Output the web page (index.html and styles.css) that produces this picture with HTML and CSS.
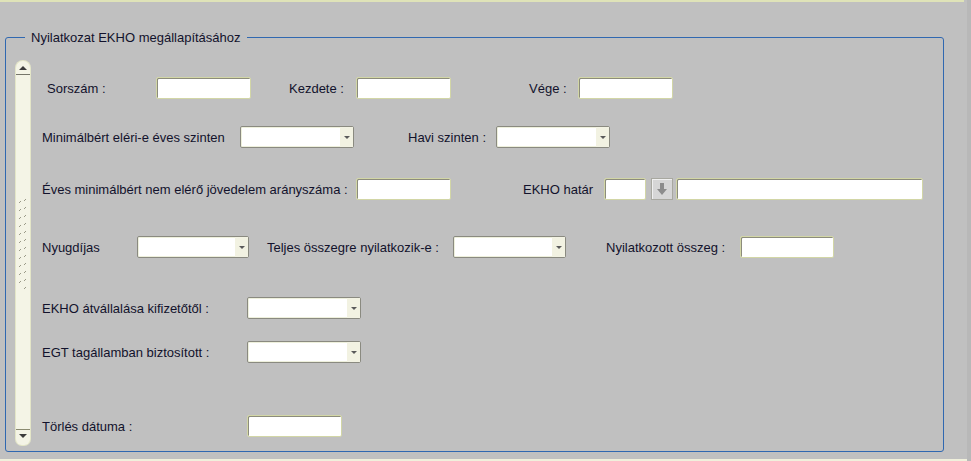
FILE: index.html
```html
<!DOCTYPE html>
<html lang="hu">
<head>
    <meta charset="UTF-8">
    <title>Nyilatkozat EKHO megállapításához</title>
    <link rel="stylesheet" href="styles.css">
</head>
<body>

<div class="window">
    <div class="top-strip"></div>

    <fieldset class="panel">
        <legend>Nyilatkozat EKHO megállapításához</legend>

        <div class="panel-body">
            <div class="scrollbar">
                <div class="scroll-btn up"><span class="tri-up"></span></div>
                <div class="scroll-track">
                    <svg class="grip" width="10" height="92" viewBox="0 0 10 92">
                        <defs>
                            <pattern id="grip" width="10" height="8" patternUnits="userSpaceOnUse">
                                <rect x="1" y="5" width="1" height="1" fill="#9a9a88"/>
                                <rect x="2" y="4" width="1" height="1" fill="#9a9a88"/>
                                <rect x="6" y="3" width="1" height="1" fill="#9a9a88"/>
                                <rect x="7" y="2" width="1" height="1" fill="#9a9a88"/>
                            </pattern>
                        </defs>
                        <rect width="10" height="92" fill="url(#grip)"/>
                    </svg>
                </div>
                <div class="scroll-btn down"><span class="tri-down"></span></div>
            </div>

            <div class="form">
                <div class="row row-1">
                    <label class="lbl-sorszam">Sorszám :</label>
                    <input class="w95" type="text">
                    <label class="lbl-kezdete">Kezdete :</label>
                    <input class="w95" type="text">
                    <label class="lbl-vege">Vége :</label>
                    <input class="w95" type="text">
                </div>

                <div class="row row-2">
                    <label class="lbl-minimal">Minimálbért eléri-e éves szinten</label>
                    <div class="combo w114"><span class="combo-btn"></span></div>
                    <label class="lbl-havi">Havi szinten :</label>
                    <div class="combo w114"><span class="combo-btn"></span></div>
                </div>

                <div class="row row-3">
                    <label class="lbl-aranyszam">Éves minimálbért nem elérő jövedelem arányszáma :</label>
                    <input class="w95" type="text">
                    <label class="lbl-hatar">EKHO határ</label>
                    <input class="w42" type="text">
                    <button class="lov-btn">
                        <svg width="14" height="14" viewBox="0 0 14 14">
                            <path d="M5 1h4v6h3l-5 6-5-6h3z" fill="#8c8c8c"/>
                        </svg>
                    </button>
                    <input class="w247" type="text">
                </div>

                <div class="row row-4">
                    <label class="lbl-nyugdij">Nyugdíjas</label>
                    <div class="combo w112"><span class="combo-btn"></span></div>
                    <label class="lbl-teljes">Teljes összegre nyilatkozik-e :</label>
                    <div class="combo w113"><span class="combo-btn"></span></div>
                    <label class="lbl-osszeg">Nyilatkozott összeg :</label>
                    <input class="w94" type="text">
                </div>

                <div class="row row-5">
                    <label class="lbl-wide">EKHO átvállalása kifizetőtől :</label>
                    <div class="combo w114"><span class="combo-btn"></span></div>
                </div>

                <div class="row row-6">
                    <label class="lbl-wide">EGT tagállamban biztosított :</label>
                    <div class="combo w114"><span class="combo-btn"></span></div>
                </div>

                <div class="row row-7">
                    <label class="lbl-wide">Törlés dátuma :</label>
                    <input class="w95" type="text">
                </div>
            </div>
        </div>
    </fieldset>

    <div class="bottom-strip"></div>
</div>

</body>
</html>
```

FILE: styles.css
```css
html, body {
    margin: 0;
    padding: 0;
}
body {
    background: #c0c0c0;
    font-family: 'Liberation Sans', Arial, sans-serif;
    font-size: 13px;
    color: #12122c;
    width: 971px;
    height: 461px;
    overflow: hidden;
}
.window {
    position: relative;
    width: 971px;
    height: 461px;
    border-right: 4px solid #b8b8b8;
    box-sizing: border-box;
}
.top-strip {
    height: 2px;
    width: 964px;
    background: #dfe3b8;
}
.bottom-strip {
    position: absolute;
    left: 0;
    right: 0;
    bottom: 0;
    height: 2px;
    background: #f0f0dc;
}
.panel {
    margin: 28px 0 0 5px;
    padding: 0;
    width: 939px;
    height: 422px;
    box-sizing: border-box;
    border: 1px solid #3068b0;
    border-radius: 3px;
}
.panel legend {
    margin-left: 19px;
    padding: 0 6px;
    line-height: 15px;
    font-size: 13px;
}
.panel-body {
    display: flex;
    align-items: flex-start;
}

/* vertical scrollbar */
.scrollbar {
    margin: 16px 0 0 10px;
    width: 14px;
    height: 384px;
    background: #f4f4e6;
    border-radius: 7px 7px 6px 6px;
    box-shadow: 0 0 0 1px #e4e6c8;
    display: flex;
    flex-direction: column;
}
.scroll-btn {
    height: 13px;
    display: flex;
    align-items: center;
    justify-content: center;
}
.scroll-btn.up {
    border-bottom: 1px solid #76766a;
}
.scroll-btn.down {
    border-top: 1px solid #8a8a70;
    height: 15px;
}
.tri-up {
    width: 0;
    height: 0;
    border-left: 4px solid transparent;
    border-right: 4px solid transparent;
    border-bottom: 4px solid #3c3c3c;
}
.tri-down {
    width: 0;
    height: 0;
    border-left: 4px solid transparent;
    border-right: 4px solid transparent;
    border-top: 4px solid #3c3c3c;
    margin-bottom: 4px;
}
.scroll-track {
    flex: 1;
    display: flex;
    justify-content: center;
    align-items: flex-start;
}
.grip {
    margin-top: 122px;
}

/* form rows */
.form {
    margin-left: 12px;
    padding-top: 32px;
    display: flex;
    flex-direction: column;
}
.row {
    display: flex;
    align-items: center;
    height: 22px;
}
.row-2 { margin-top: 27px; }
.row-3 { margin-top: 30px; }
.row-4 { margin-top: 36px; }
.row-5 { margin-top: 39px; }
.row-6 { margin-top: 22px; }
.row-7 { margin-top: 52px; }

.row label {
    flex: none;
    white-space: nowrap;
}
.lbl-sorszam { margin-left: 5px; width: 109px; }
.lbl-kezdete { margin-left: 38px; width: 67px; }
.lbl-vege { margin-left: 78px; width: 49px; }
.lbl-minimal { width: 198px; }
.lbl-havi { margin-left: 54px; width: 88px; }
.lbl-aranyszam { width: 314px; }
.lbl-hatar { margin-left: 72px; width: 81px; }
.lbl-nyugdij { width: 95px; }
.lbl-teljes { margin-left: 18px; width: 186px; }
.lbl-osszeg { margin-left: 40px; width: 134px; }
.lbl-wide { width: 205px; }

input {
    flex: none;
    height: 22px;
    box-sizing: border-box;
    margin: 0;
    padding: 0 3px;
    background: #fff;
    border: 1px solid #d2d6a6;
    border-radius: 2px;
    box-shadow: inset 1px 1px 0 #8c8c7c;
    font: inherit;
    outline: none;
}
.w42 { width: 42px; }
.w94 { width: 94px; }
.w95 { width: 95px; }
.w112 { width: 112px; }
.w113 { width: 113px; }
.w114 { width: 114px; }
.w247 { width: 247px; margin-left: 3px; }

.combo {
    flex: none;
    height: 22px;
    box-sizing: border-box;
    background: #fff;
    border: 1px solid #8a8a80;
    border-radius: 2px;
    box-shadow: inset 0 0 0 1px #eef0dc;
    display: flex;
    justify-content: flex-end;
}
.combo-btn {
    width: 13px;
    background: #f2f2e2;
    display: flex;
    align-items: center;
    justify-content: center;
}
.combo-btn::after {
    content: "";
    border-left: 3px solid transparent;
    border-right: 3px solid transparent;
    border-top: 3px solid #5a5a5a;
}

.lov-btn {
    flex: none;
    margin: 0 0 0 5px;
    padding: 0;
    width: 22px;
    height: 22px;
    background: #d6d6d6;
    border: 1px solid #a8a8a0;
    box-shadow: inset 1px 1px 0 #f0f0f0;
    display: flex;
    align-items: center;
    justify-content: center;
}
```
